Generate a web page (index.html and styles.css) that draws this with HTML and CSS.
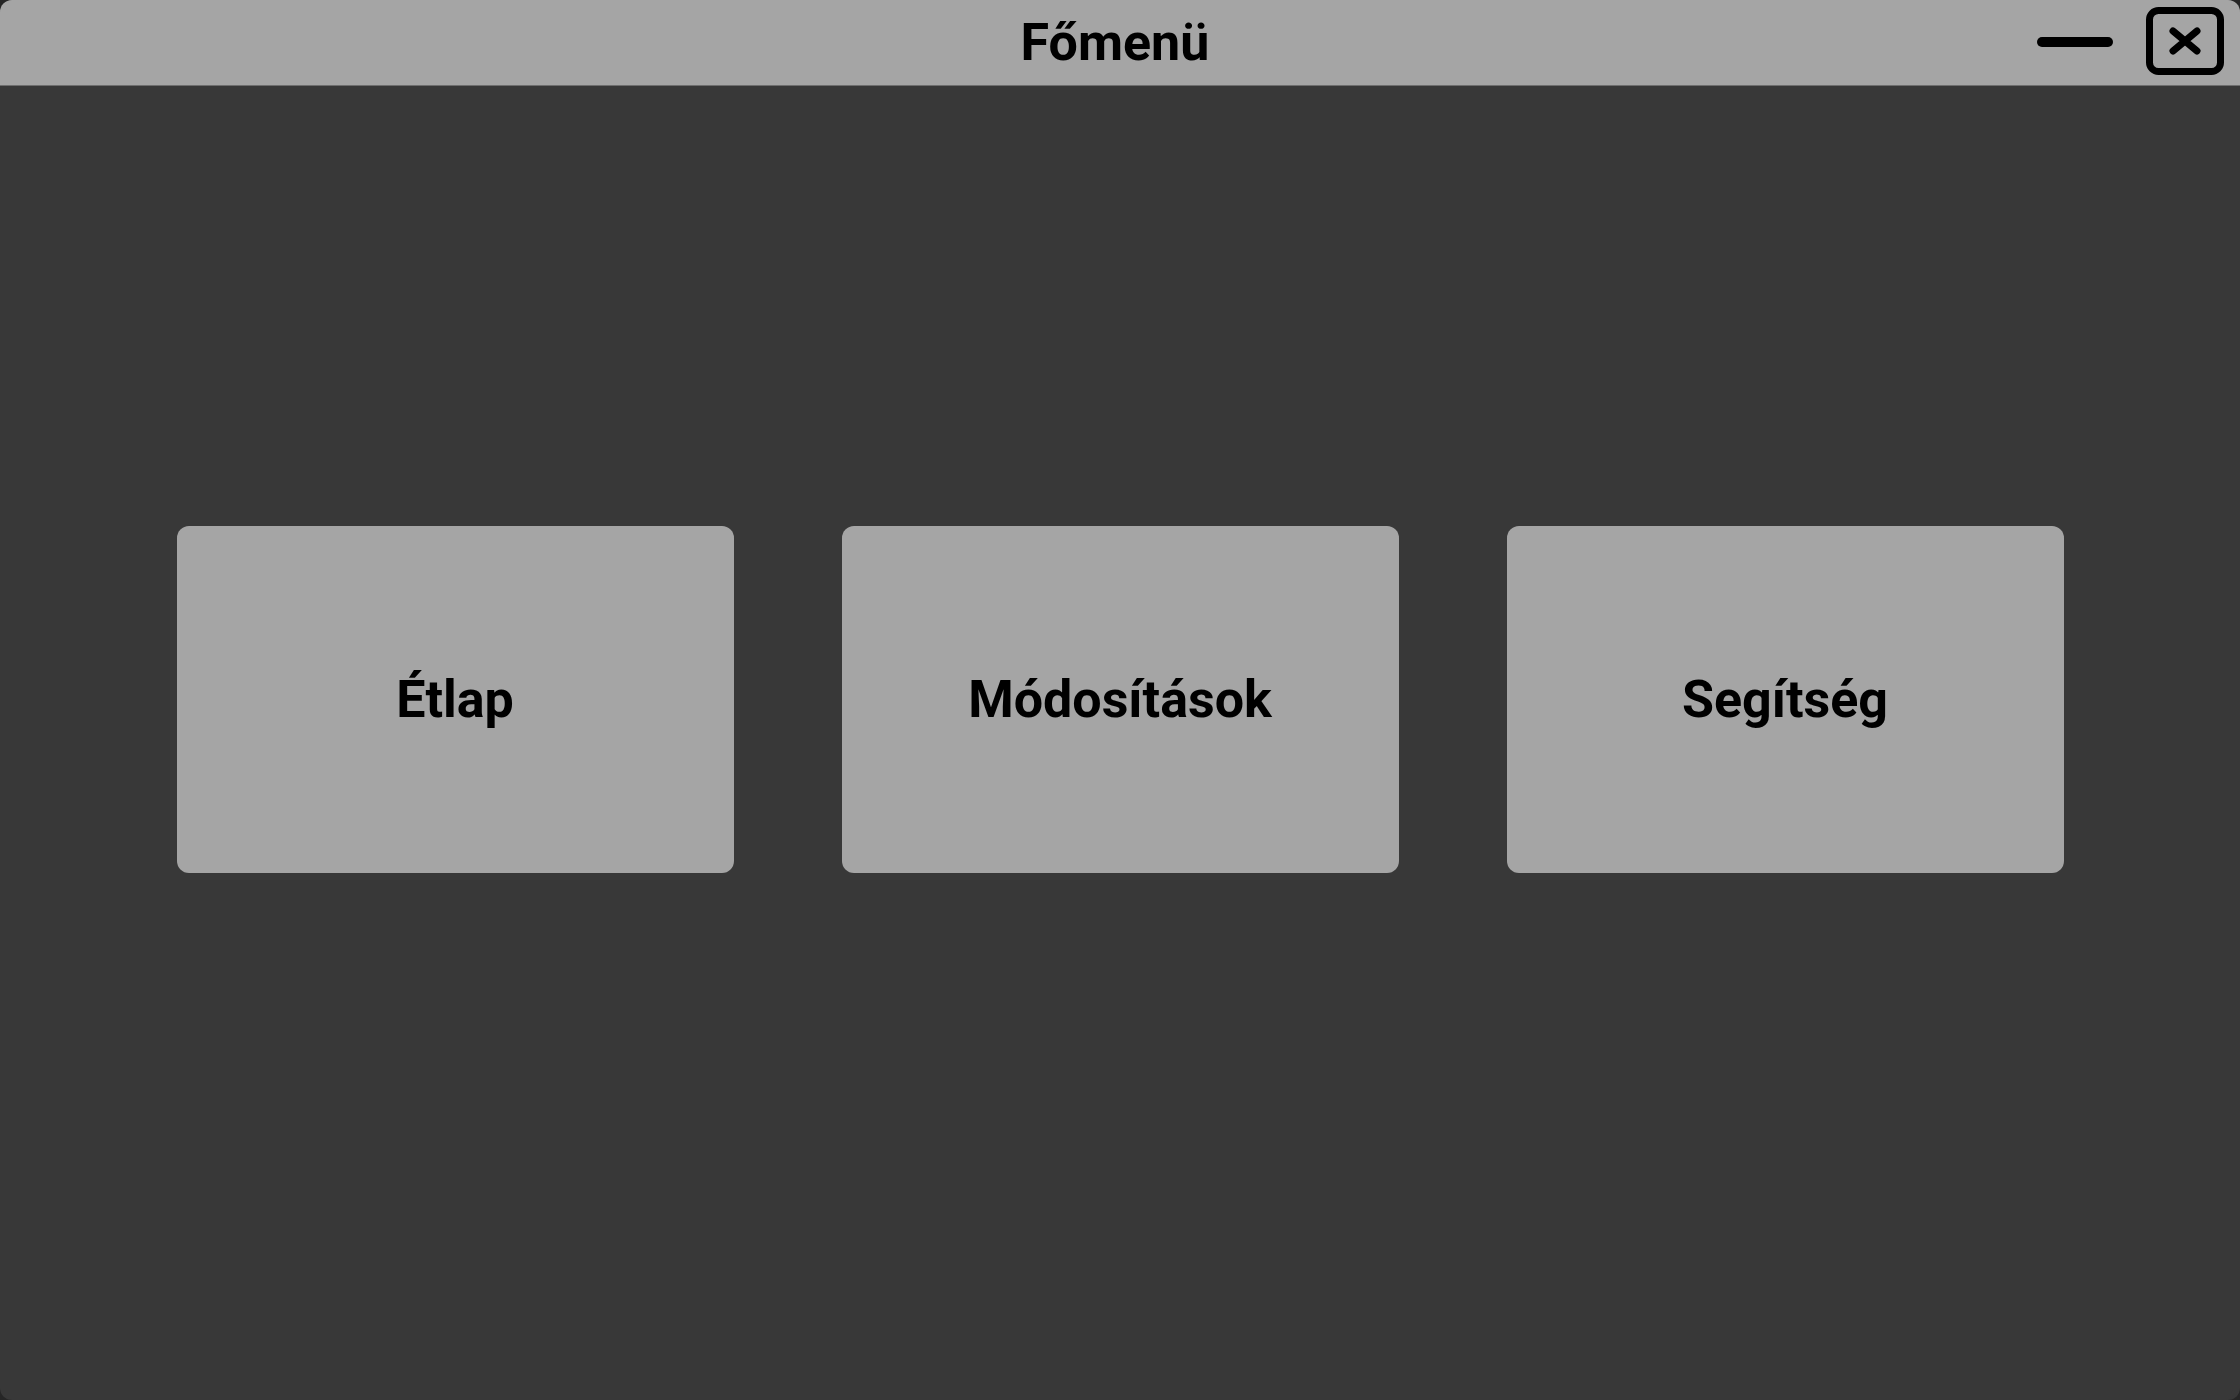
FILE: index.html
```html
<!DOCTYPE html>
<html lang="hu">
<head>
  <meta charset="UTF-8">
  <title>Főmenü</title>
  <link rel="stylesheet" href="styles.css">
</head>

<body>

  <div class="window">
    <header class="title-bar">
      <h1>Főmenü</h1>
      <div class="window-controls">
        <button class="minimize-btn" aria-label="Minimize">
          <svg width="80" height="14" viewBox="0 0 80 14">
            <line x1="6" y1="7" x2="72" y2="7" stroke="#000" stroke-width="10" stroke-linecap="round" />
          </svg>
        </button>
        <button class="close-btn" aria-label="Close">
          <svg width="78" height="68" viewBox="0 0 78 68">
            <rect x="3.5" y="3.5" width="71" height="61" rx="9" fill="none" stroke="#000" stroke-width="7" />
            <path d="M27 24 L51 44 M51 24 L27 44" stroke="#000" stroke-width="7" stroke-linecap="round" />
          </svg>
        </button>
      </div>
    </header>

    <main class="menu">
      <button class="menu-btn">Étlap</button>
      <button class="menu-btn">Módosítások</button>
      <button class="menu-btn">Segítség</button>
    </main>
  </div>

</body>
</html>
```

FILE: styles.css
```css
body {
  margin: 0;
  padding: 0;
  background: #262626;
  font-family: Roboto, "Liberation Sans", sans-serif;
}

.window {
  display: flex;
  flex-direction: column;
  height: 1400px;
  background: #383838;
  border-radius: 12px;
  overflow: hidden;
}

.title-bar {
  position: relative;
  display: flex;
  justify-content: center;
  align-items: center;
  height: 85px;
  padding-right: 10px;
  background: #a5a5a5;
  border-bottom: 1px solid #6e6e6e;
}

.title-bar h1 {
  margin: 0;
  font-size: 52px;
  font-weight: 700;
  color: #000;
}

.window-controls {
  position: absolute;
  top: 7px;
  right: 16px;
  display: flex;
  align-items: center;
  gap: 30px;
}

.minimize-btn, .close-btn {
  display: flex;
  padding: 0;
  background: none;
  border: none;
  cursor: pointer;
}

.minimize-btn {
  margin-top: 2px;
}

/* three big buttons, centred on the whole window */
.menu {
  flex: 1;
  display: flex;
  justify-content: center;
  align-items: flex-start;
  gap: 108px;
  padding-top: 440px;
}

.menu-btn {
  width: 557px;
  height: 347px;
  background: #a5a5a5;
  border: none;
  border-radius: 12px;
  font-family: Roboto, "Liberation Sans", sans-serif;
  font-size: 52px;
  font-weight: 700;
  color: #000;
  cursor: pointer;
}

.menu-btn:hover {
  background: #b3b3b3;
}
```
